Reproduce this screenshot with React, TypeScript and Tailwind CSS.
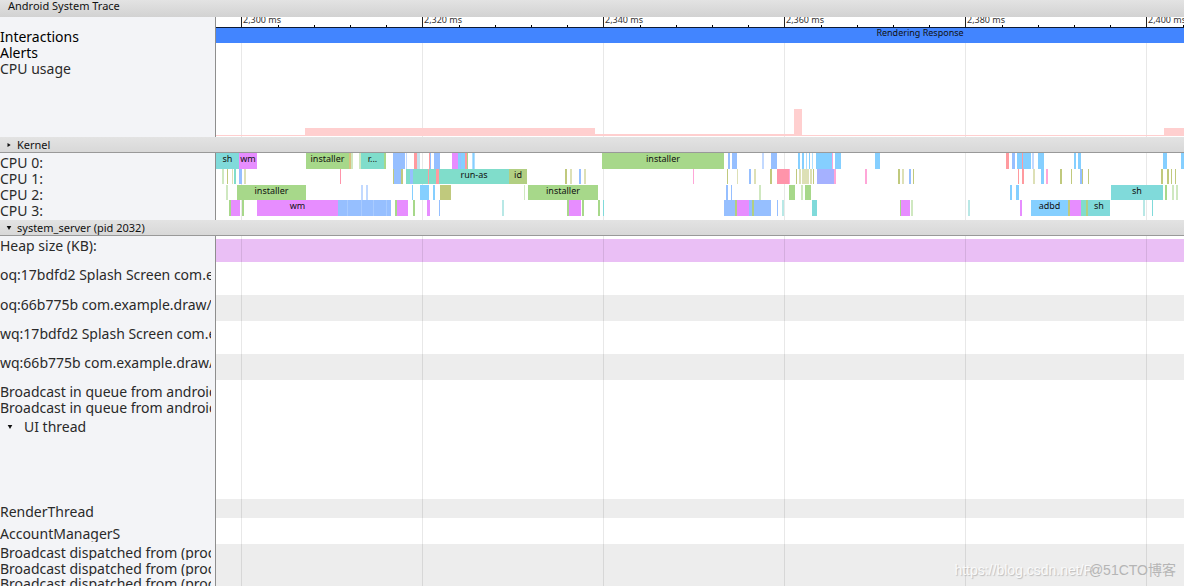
import React, { useState } from 'react';

type Slice = [start: number, end: number, color: string, title?: string];

const TEAL = '#80dada';
const AQUA = '#80ddcb';
const VIOLET = '#e78dff';
const GREEN = '#a7d88a';
const LEAF = '#b2cf82';
const OLIVE = '#c0c97d';
const BLUE = '#96bfff';
const SKY = '#85cfff';
const PERI = '#a5b1ff';
const RED = '#ff9a9f';
const ROSE = '#ff94aa';
const PINK = '#ffa6d8';
const PALE_GREEN = '#cfe8c0';
const PALE_OLIVE = '#dde0b6';
const PALE_BLUE = '#c2d9ff';
const PALE_TEAL = '#b8e8e6';

const cpus: { name: string; y: number; height: number; slices: Slice[] }[] = [
  {
    name: 'CPU 0:',
    y: 0,
    height: 16,
    slices: [
      [0, 23, TEAL, 'sh'], [23, 41, VIOLET, 'wm'], [90, 133, GREEN, 'installer'], [133, 135, '#d8c080'], [135, 137, PALE_GREEN],
      [143, 145, PALE_GREEN], [145, 168, AQUA, 'r...'], [168, 170, GREEN], [177, 189, BLUE], [190, 191, PALE_BLUE],
      [198, 201, RED], [201, 204, '#c3e2ee'], [213, 214, RED], [214, 215, BLUE], [218, 224, BLUE], [236, 242, VIOLET],
      [242, 249, SKY], [244, 245, BLUE], [249, 251, RED], [251, 252, GREEN], [256, 259, '#b0dfff'], [257, 258, SKY],
      [386, 508, GREEN, 'installer'], [512, 514, BLUE], [516, 521, BLUE], [546, 548, PALE_BLUE], [555, 561, BLUE],
      [582, 584, SKY], [586, 588, SKY], [590, 591, '#aedfff'], [593, 594, SKY], [596, 597, '#aedfff'],
      [600, 616, SKY], [616, 617, PINK], [619, 625, SKY], [659, 664, SKY], [790, 793, RED], [796, 799, BLUE],
      [801, 815, SKY], [806, 807, RED], [816, 818, PALE_BLUE], [822, 828, SKY], [858, 860, SKY], [862, 865, SKY],
      [947, 951, SKY], [965, 968, SKY],
    ],
  },
  {
    name: 'CPU 1:',
    y: 16,
    height: 15,
    slices: [
      [6, 8, PALE_GREEN], [11, 12, OLIVE], [16, 17, PALE_OLIVE], [18, 20, AQUA], [23, 26, BLUE], [28, 30, PALE_OLIVE],
      [124, 125, ROSE], [177, 178, OLIVE], [178, 185, BLUE], [185, 187, OLIVE], [190, 194, AQUA], [194, 197, BLUE],
      [197, 212, AQUA], [212, 213, RED], [213, 220, AQUA], [220, 223, RED], [223, 293, AQUA, 'run-as'],
      [293, 311, LEAF, 'id'], [349, 351, OLIVE], [354, 356, PALE_OLIVE], [363, 365, BLUE], [368, 370, PALE_OLIVE],
      [477, 478, PINK], [511, 512, OLIVE], [521, 522, PALE_OLIVE], [533, 535, BLUE], [538, 540, PALE_OLIVE],
      [554, 556, OLIVE], [561, 573, ROSE], [573, 574, PINK], [580, 581, OLIVE], [583, 585, PALE_OLIVE],
      [586, 593, PALE_OLIVE], [594, 596, PALE_OLIVE], [597, 598, OLIVE], [601, 618, PERI], [618, 620, PINK],
      [649, 651, PINK], [682, 684, OLIVE], [686, 688, PALE_OLIVE], [693, 695, BLUE], [697, 698, OLIVE],
      [802, 803, RED], [806, 808, RED], [817, 819, PALE_OLIVE], [825, 828, SKY], [830, 832, PINK], [844, 846, OLIVE],
      [855, 856, OLIVE], [864, 866, BLUE], [866, 867, OLIVE], [872, 873, OLIVE], [945, 947, OLIVE],
      [951, 953, OLIVE], [955, 956, OLIVE], [959, 960, OLIVE],
    ],
  },
  {
    name: 'CPU 2:',
    y: 32,
    height: 15,
    slices: [
      [10, 12, PALE_GREEN], [21, 90, GREEN, 'installer'], [145, 147, PALE_BLUE], [150, 152, PALE_BLUE], [196, 197, SKY],
      [204, 213, SKY], [217, 219, SKY], [224, 235, OLIVE], [308, 309, PALE_GREEN], [312, 382, GREEN, 'installer'],
      [510, 512, BLUE], [515, 516, BLUE], [543, 545, PALE_GREEN], [573, 579, GREEN], [585, 587, PALE_GREEN],
      [589, 595, GREEN], [794, 796, SKY], [800, 803, SKY], [895, 947, TEAL, 'sh'], [949, 951, GREEN],
      [956, 958, PALE_GREEN], [960, 962, PALE_GREEN],
    ],
  },
  {
    name: 'CPU 3:',
    y: 47,
    height: 16,
    slices: [
      [13, 15, GREEN], [15, 24, VIOLET], [26, 28, GREEN], [41, 122, VIOLET, 'wm'], [122, 175, BLUE],
      [131, 132, '#a9cbff'], [145, 146, '#a9cbff'], [157, 158, '#a9cbff'], [170, 171, '#a9cbff'],
      [179, 181, GREEN], [181, 192, VIOLET], [197, 199, GREEN], [211, 214, VIOLET], [223, 224, BLUE],
      [286, 288, PALE_TEAL], [351, 353, GREEN], [353, 365, VIOLET], [366, 368, GREEN], [382, 384, GREEN],
      [387, 388, TEAL], [508, 519, BLUE], [519, 521, LEAF], [521, 533, VIOLET], [533, 536, BLUE], [536, 538, LEAF],
      [538, 555, BLUE], [561, 562, BLUE], [566, 568, PALE_TEAL], [596, 601, TEAL], [684, 685, GREEN],
      [685, 694, VIOLET], [695, 697, PALE_GREEN], [752, 754, PALE_TEAL], [804, 806, VIOLET], [815, 852, SKY, 'adbd'],
      [852, 854, OLIVE], [854, 865, VIOLET], [865, 870, AQUA], [870, 872, LEAF], [872, 894, TEAL, 'sh'],
      [927, 929, PALE_TEAL], [936, 937, TEAL],
    ],
  },
];

// x, width and height of each step of the usage graph
const usage = [
  [0, 89, 1],
  [89, 290, 8],
  [379, 199, 2],
  [578, 8, 27],
  [586, 362, 1],
  [948, 1600, 8],
];

const processRows = [
  { label: 'Heap size (KB):', row: 'h-[30px]', text: 'pt-[2px]', band: 'mt-[3px] h-[23px] bg-[#eabff5]' },
  { label: 'oq:17bdfd2 Splash Screen com.example.draw', row: 'h-[29px]', text: 'pt-px', band: '' },
  { label: 'oq:66b775b com.example.draw/com.example', row: 'h-[29px]', text: 'pt-[2px]', band: 'h-[26px] bg-[#ededed]' },
  { label: 'wq:17bdfd2 Splash Screen com.example.draw', row: 'h-[30px]', text: 'pt-[2px]', band: '' },
  { label: 'wq:66b775b com.example.draw/com.example', row: 'h-[30px]', text: 'pt-px', band: 'h-[26px] bg-[#ededed]' },
  { label: 'Broadcast in queue from android', row: 'h-[16px]', text: '', band: '' },
  { label: 'Broadcast in queue from android', row: 'h-[16px]', text: '', band: '' },
  { label: 'UI thread', row: 'h-[83px]', text: 'pt-[3px]', band: '', toggle: true },
  { label: 'RenderThread', row: 'h-[24px]', text: 'pt-[5px]', band: 'h-[19px] bg-[#ededed]' },
  { label: 'AccountManagerS', row: 'h-[21px]', text: 'pt-[3px]', band: '' },
  { label: 'Broadcast dispatched from (process)', row: 'h-[16px]', text: 'pt-px', band: 'h-full bg-[#ededed]' },
  { label: 'Broadcast dispatched from (process)', row: 'h-[16px]', text: 'pt-px', band: 'h-full bg-[#ededed]' },
  { label: 'Broadcast dispatched from (process)', row: 'h-[16px]', text: '', band: 'h-full bg-[#ededed]' },
];

const majorTicks = Array.from({ length: 14 }, (_, i) => ({ x: 26 + i * 181, ms: 2300 + i * 20 }));

const GridLines = () => (
  <g fill="#000" fillOpacity={0.09}>
    {majorTicks.map(({ x }) => (
      <rect key={x} x={x - 1} y="0" width="1" height="100%" />
    ))}
  </g>
);

const Ruler = () => (
  <svg className="block h-[11px] w-full">
    {majorTicks.map(({ x, ms }) => (
      <g key={ms}>
        <rect x={x - 1} y="0" width="1" height="10" fill="#222" />
        <text x={x + 1} y="6" fontSize="9" fill="#333">
          {ms.toLocaleString('en-US')} ms
        </text>
        {[1, 2, 3, 4].map((n) => (
          <rect key={n} x={x + n * 36} y="8" width="1" height="2" fill="#000" />
        ))}
      </g>
    ))}
    <rect x="0" y="10" width="100%" height="1" fill="#0d1a33" />
  </svg>
);

const Arrow = ({ open }: { open: boolean }) => (
  <svg viewBox="0 0 6 6" className="size-[6px] shrink-0" fill="#111">
    {open ? <path d="M.7 1h4.6L3 5z" /> : <path d="M1.5 1v4L4.7 3z" />}
  </svg>
);

const SectionHeader = ({ title, initiallyOpen }: { title: string; initiallyOpen: boolean }) => {
  const [open, setOpen] = useState(initiallyOpen);
  return (
    <button
      type="button"
      aria-expanded={open}
      onClick={() => setOpen(!open)}
      className="flex min-h-4 w-full shrink-0 items-center gap-[5px] border-b border-[#999] bg-linear-to-b from-[#e3e3e3] to-[#d8d8d8] pl-[6px] text-left text-[11px] leading-[15px] text-[#111]"
    >
      <Arrow open={open} />
      {title}
    </button>
  );
};

const LABELS = 'w-[216px] shrink-0 overflow-hidden border-r border-[#8e8e8e] bg-[#f3f4f7] pr-1';

export default function App() {
  const [threadOpen, setThreadOpen] = useState(true);

  return (
    <main className="relative flex h-screen flex-col overflow-hidden bg-white font-['Noto_Sans','Open_Sans',sans-serif] text-[14px] leading-4 text-[#2a2a2a]">
      <h1 className="h-[17px] shrink-0 bg-linear-to-b from-[#e3e3e3] to-[#d2d2d2] pl-2 text-[11px] leading-3 text-[#111]">
        Android System Trace
      </h1>

      {/* Interactions, alerts and CPU usage */}
      <section className="flex shrink-0">
        <div className={`${LABELS} pt-3 text-black`}>
          <div>Interactions</div>
          <div>Alerts</div>
          <div className="text-[#2a2a2a]">CPU usage</div>
        </div>
        <div className="min-w-0 flex-1">
          <Ruler />
          <svg className="block h-[15px] w-full">
            <rect width="100%" height="15" fill="#4285ff" />
            <text x="704" y="8" fontSize="9" textAnchor="middle" fill="#111">
              Rendering Response
            </text>
          </svg>
          <svg className="block h-[94px] w-full">
            <GridLines />
            {usage.map(([x, width, height]) => (
              <rect key={x} x={x} y={93 - height} width={width} height={height} fill="#ffcfcf" />
            ))}
          </svg>
        </div>
      </section>

      {/* Kernel */}
      <SectionHeader title="Kernel" initiallyOpen={false} />
      <section className="flex h-[67px] shrink-0">
        <div className={`${LABELS} pt-[2px]`}>
          {cpus.map((cpu) => (
            <div key={cpu.name} className="h-4">
              {cpu.name}
            </div>
          ))}
        </div>
        <svg className="block h-full w-full min-w-0 flex-1">
          <GridLines />
          {cpus.map((cpu) => (
            <g key={cpu.name}>
              {cpu.slices.map(([start, end, color, title]) => (
                <g key={start}>
                  <rect x={start} y={cpu.y} width={end - start} height={cpu.height} fill={color} />
                  {title && (
                    <text x={(start + end) / 2} y={cpu.y + 9} fontSize="9" textAnchor="middle" fill="#111">
                      {title}
                    </text>
                  )}
                </g>
              ))}
            </g>
          ))}
        </svg>
      </section>

      {/* system_server */}
      <SectionHeader title="system_server (pid 2032)" initiallyOpen={true} />
      <section className="flex-1">
        {processRows.map(({ label, row, text, band, toggle }, i) => (
          <div key={i} className={`flex ${row}`}>
            <div className={`${LABELS} ${text}`}>
              {toggle ? (
                <button
                  type="button"
                  aria-expanded={threadOpen}
                  onClick={() => setThreadOpen(!threadOpen)}
                  className="flex items-center gap-[11px] pl-[7px]"
                >
                  <Arrow open={threadOpen} />
                  {label}
                </button>
              ) : (
                <div className="h-4 overflow-hidden whitespace-nowrap">{label}</div>
              )}
            </div>
            <div className="grid min-w-0 flex-1">
              <div className={`col-start-1 row-start-1 ${band}`} />
              <svg className="col-start-1 row-start-1 block h-full w-full">
                <GridLines />
              </svg>
            </div>
          </div>
        ))}
      </section>

      {/* Watermarks */}
      <div className="absolute right-2 bottom-2 flex font-['Liberation_Sans','Noto_Sans_CJK_SC',sans-serif] text-[14px] leading-4 whitespace-nowrap">
        <span className="text-[#fafafa] [text-shadow:1px_1px_1px_#bbb]">https://blog.csdn.net/P</span>
        <span className="-ml-1 text-[#b5b5b5]">@51CTO博客</span>
      </div>
    </main>
  );
}
